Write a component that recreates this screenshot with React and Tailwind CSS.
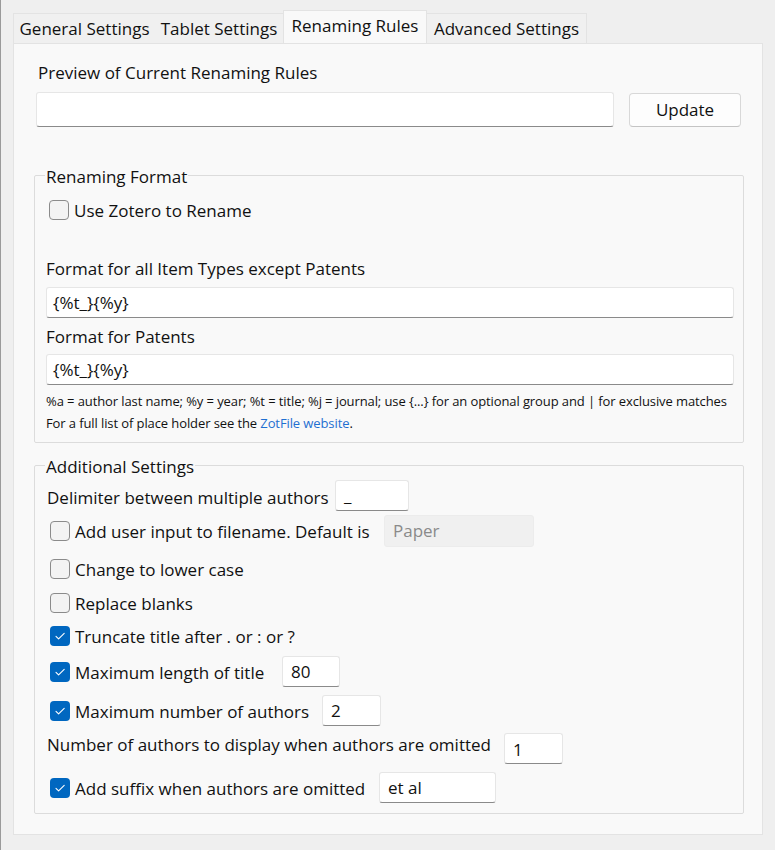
import { useState } from "react";

const font = { fontFamily: '"Open Sans", "Noto Sans", sans-serif' };

function Checkbox({ checked }) {
  if (checked) {
    return (
      <span className="flex h-[20px] w-[20px] shrink-0 items-center justify-center rounded-[4px] bg-[#0067c0]">
        <svg width="20" height="20" viewBox="0 0 20 20" fill="none">
          <path d="M6 10.3l2.6 2.6L14.2 7.3" stroke="#ffffff" strokeWidth="1.1" strokeLinecap="round" strokeLinejoin="round" />
        </svg>
      </span>
    );
  }
  return <span className="block h-[20px] w-[20px] shrink-0 rounded-[4px] border border-[#8b8b8b] bg-[#f3f3f3]" />;
}

function TextBox({ value, className = "", disabled }) {
  return (
    <div
      className={
        "flex items-center rounded-[3px] border px-[8px] " +
        (disabled
          ? "border-[#ececec] bg-[#f0f0f0] text-[#8a8a8a] "
          : "border-[#e6e6e6] border-b-[#8a8a8a] bg-white text-[#111111] ") +
        className
      }
    >
      {value}
    </div>
  );
}

function CheckRow({ checked, label, labelWidth, children, className = "" }) {
  return (
    <div className={"flex items-center pl-[3px] " + className}>
      <Checkbox checked={checked} />
      <span className="pl-[5px] pt-[2px] leading-[22px]" style={labelWidth ? { width: labelWidth } : undefined}>
        {label}
      </span>
      {children}
    </div>
  );
}

export default function App() {
  const [tab] = useState("Renaming Rules");
  const tabs = [
    { name: "General Settings", w: "w-[142px]" },
    { name: "Tablet Settings", w: "w-[128px]" },
    { name: "Renaming Rules", w: "w-[144px]" },
    { name: "Advanced Settings", w: "w-[160px]" },
  ];

  return (
    <div className="h-[850px] w-[775px] overflow-hidden border-l border-[#9a9a9a] bg-[#efefef] text-[17px] text-[#111111]" style={font}>
      {/* Tabs */}
      <div className="flex h-[43px] items-end pl-[12px]">
        {tabs.map((t, i) =>
          t.name === tab ? (
            <div key={t.name} className={"flex h-[33px] items-center justify-center border-x border-t border-[#e3e3e3] bg-[#f9f9f9] pb-[2px] " + t.w}>
              {t.name}
            </div>
          ) : (
            <div
              key={t.name}
              className={
                "flex h-[30px] items-center justify-center border-t border-[#e3e3e3] bg-[#f0f0f0] pt-[1px] " +
                (i === 0 ? "border-l " : "") +
                (i === tabs.length - 1 ? "border-r " : "") +
                t.w
              }
            >
              {t.name}
            </div>
          )
        )}
      </div>

      {/* Panel */}
      <div className="ml-[12px] h-[792px] w-[750px] border border-[#e3e3e3] bg-[#f9f9f9] pl-[20px] pr-[18px] pt-[18px]">
        <div className="pl-[4px] leading-[22px]">Preview of Current Renaming Rules</div>
        <div className="mt-[8px] flex items-center gap-[15px] pl-[2px] pr-[3px]">
          <TextBox value="" className="h-[35px] flex-1" />
          <button className="h-[34px] w-[112px] rounded-[4px] border border-[#d8d8d8] border-b-[#c4c4c4] bg-[#fdfdfd] text-[#111111]">
            Update
          </button>
        </div>

        {/* Renaming Format */}
        <fieldset className="mt-[37px] rounded-[2px] border border-[#dcdcdc] pb-[8px] pl-[11px] pr-[9px]">
          <legend className="-ml-[1px] px-[1px] pt-[3px] leading-[20px]">Renaming Format</legend>
          <CheckRow checked={false} label="Use Zotero to Rename" className="mt-[11px] h-[24px]" />
          <div className="mt-[35px] leading-[24px]">Format for all Item Types except Patents</div>
          <TextBox value="{%t_}{%y}" className="mt-[6px] h-[31px] pl-[6px]" />
          <div className="mt-[7px] leading-[24px]">Format for Patents</div>
          <TextBox value="{%t_}{%y}" className="mt-[5px] h-[31px] pl-[6px]" />
          <div className="mt-[5px] whitespace-nowrap text-[13px] leading-[22px] tracking-[-0.1px]">
            %a = author last name; %y = year; %t = title; %j = journal; use {"{...}"} for an optional group and | for exclusive matches
          </div>
          <div className="whitespace-nowrap text-[13px] leading-[22px] tracking-[-0.1px]">
            For a full list of place holder see the <span className="text-[#1f6fd1]">ZotFile website</span>.
          </div>
        </fieldset>

        {/* Additional Settings */}
        <fieldset className="mt-[11px] rounded-[2px] border border-[#dcdcdc] pb-[10px] pl-[12px] pr-[9px]">
          <legend className="-ml-[2px] px-[1px] pt-[3px] leading-[20px]">Additional Settings</legend>
          <div className="mt-[3px] flex h-[31px] items-center">
            <span className="w-[288px] pt-[5px]">Delimiter between multiple authors</span>
            <TextBox value="_" className="h-[31px] w-[74px]" />
          </div>
          <CheckRow checked={false} label="Add user input to filename. Default is" labelWidth="314px" className="mt-[4px] h-[32px]">
            <TextBox value="Paper" disabled className="h-[32px] w-[150px]" />
          </CheckRow>
          <CheckRow checked={false} label="Change to lower case" className="mt-[10px] h-[24px]" />
          <CheckRow checked={false} label="Replace blanks" className="mt-[10px] h-[24px]" />
          <CheckRow checked label="Truncate title after . or : or ?" className="mt-[9px] h-[24px]" />
          <CheckRow checked label="Maximum length of title" labelWidth="212px" className="mt-[8px] h-[31px]">
            <TextBox value="80" className="h-[31px] w-[58px]" />
          </CheckRow>
          <CheckRow checked label="Maximum number of authors" labelWidth="252px" className="mt-[8px] h-[31px]">
            <TextBox value="2" className="h-[31px] w-[59px]" />
          </CheckRow>
          <div className="mt-[7px] flex h-[31px] items-start">
            <span className="w-[457px] pt-[1px] leading-[22px]">Number of authors to display when authors are omitted</span>
            <TextBox value="1" className="h-[31px] w-[59px] pt-[3px]" />
          </div>
          <CheckRow checked label="Add suffix when authors are omitted" labelWidth="309px" className="mt-[8px] h-[31px]">
            <TextBox value="et al" className="h-[31px] w-[117px]" />
          </CheckRow>
        </fieldset>
      </div>
    </div>
  );
}
